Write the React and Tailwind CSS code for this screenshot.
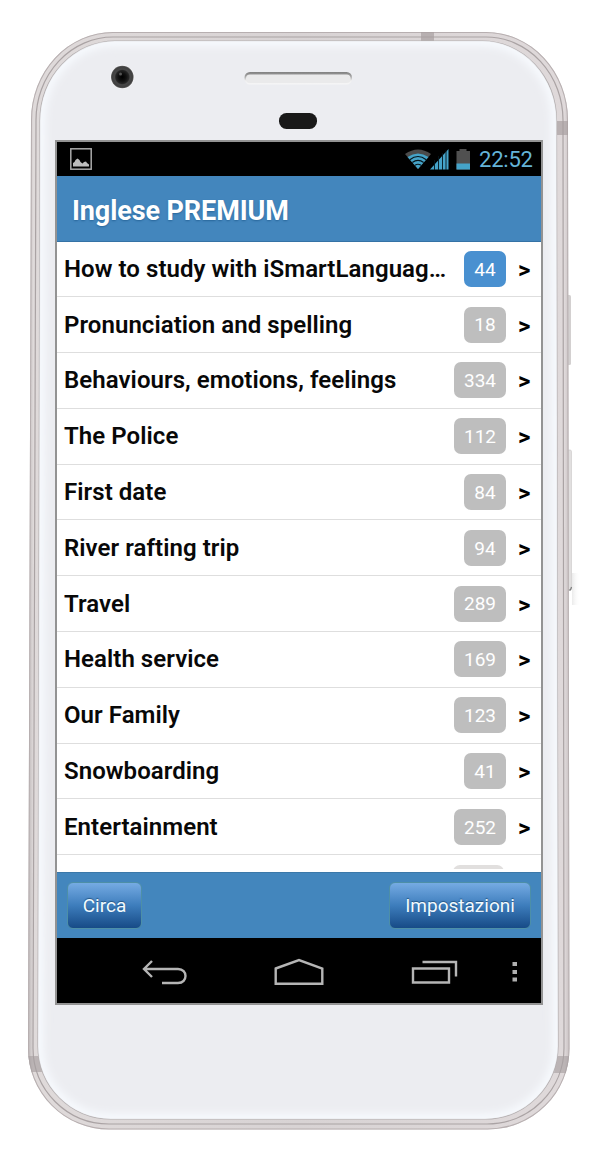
const topics = [
  ["How to study with iSmartLanguag…", 44, true],
  ["Pronunciation and spelling", 18],
  ["Behaviours, emotions, feelings", 334],
  ["The Police", 112],
  ["First date", 84],
  ["River rafting trip", 94],
  ["Travel", 289],
  ["Health service", 169],
  ["Our Family", 123],
  ["Snowboarding", 41],
  ["Entertainment", 252],
];

const OUTER = "M113 32H486A82 88 0 0 1 568 120L569.5 1048A82 81 0 0 1 487 1129.5H109A81 81 0 0 1 28 1048L31 120A82 88 0 0 1 113 32Z";
const SEAM = "M113 37H486A77 83 0 0 1 563 120L564 1048A77 76 0 0 1 487 1124H109A76 76 0 0 1 33 1048L36 120A77 83 0 0 1 113 37Z";
const FACE = "M115 41H482A74 80 0 0 1 556.500 121L558 1046A73 73 0 0 1 485 1119H111A73 73 0 0 1 38 1046L40 121A75 80 0 0 1 115 41Z";

function PhoneBody() {
  return (
    <svg className="absolute inset-0" width="600" height="1162" viewBox="0 0 600 1162" fill="none">
      <defs>
        <linearGradient id="rim" x1="28" x2="570" y1="0" y2="0" gradientUnits="userSpaceOnUse">
          <stop offset="0" stopColor="#bcb6b7" />
          <stop offset=".01" stopColor="#dfdada" />
          <stop offset=".5" stopColor="#d8d3d4" />
          <stop offset=".99" stopColor="#dfd9da" />
          <stop offset="1" stopColor="#c5bdbe" />
        </linearGradient>
        <linearGradient id="shade" x1="0" x2="1">
          <stop stopColor="#aaa" stopOpacity=".4" />
          <stop offset="1" stopColor="#fff" stopOpacity="0" />
        </linearGradient>
        <linearGradient id="slot" x1="0" x2="0" y1="0" y2="1">
          <stop stopColor="#808080" />
          <stop offset=".35" stopColor="#a5a5a5" />
          <stop offset=".7" stopColor="#f0f0f0" />
          <stop offset="1" stopColor="#f6f6f7" />
        </linearGradient>
        <radialGradient id="lens">
          <stop stopColor="#000" />
          <stop offset=".35" stopColor="#111" />
          <stop offset=".58" stopColor="#252525" />
          <stop offset=".68" stopColor="#474747" />
          <stop offset=".9" stopColor="#404040" />
          <stop offset="1" stopColor="#666" />
        </radialGradient>
        <filter id="soft"><feGaussianBlur stdDeviation="4" /></filter>
        <clipPath id="rimClip"><path d={OUTER} /></clipPath>
        <clipPath id="faceClip"><path d={FACE} /></clipPath>
      </defs>
      <rect x="566" y="295" width="5" height="70" rx="1.5" fill="#d3d0d0" />
      <rect x="566" y="450" width="5.5" height="140" rx="1.5" fill="#e1dfdf" stroke="#c9c6c6" strokeWidth=".6" />
      <path d="M568 590h2.5l1-3" stroke="#777" strokeWidth="1.2" />
      <rect x="572" y="573" width="8" height="32" fill="url(#shade)" opacity=".6" />
      <path d={OUTER} fill="url(#rim)" />
      <g clipPath="url(#rimClip)">
        <path d={OUTER} stroke="#b7afb0" strokeWidth="2" />
        <path d={SEAM} stroke="#aaa3a4" strokeWidth="1.2" />
        <path d="M421 32h13v9h-13zM556 121h13v14h-13z" fill="#a89fa1" fillOpacity=".7" />
        <path d="M28 1056h12l2 16H28zM556 1056h14v17h-16z" fill="#a89fa1" fillOpacity=".65" />
      </g>
      <path d={FACE} fill="#ecedf1" stroke="#b4afb0" strokeWidth="1.2" />
      <g clipPath="url(#faceClip)">
        <path d={FACE} stroke="#f8fbff" strokeWidth="10" filter="url(#soft)" />
      </g>
      <circle cx="122.3" cy="77" r="12" fill="#f6f6f8" />
      <circle cx="122.3" cy="77" r="11.3" fill="url(#lens)" />
      <circle cx="120.500" cy="74" r="1.5" fill="#555" />
      <rect x="244.500" y="72" width="107.500" height="12.500" rx="5.500" fill="url(#slot)" />
      <rect x="246" y="74.500" width="104.500" height="8.500" rx="4" fill="#eaeaeb" />
      <rect x="279" y="113" width="38" height="16" rx="7.500" fill="#191919" />
    </svg>
  );
}

function StatusBar() {
  return (
    <div className="flex h-[34px] shrink-0 items-center bg-black pl-[13px] pr-[8px]">
      <svg width="22" height="22" viewBox="0 0 22 22" fill="none">
        <rect x=".8" y=".8" width="20.4" height="20.4" stroke="#a9a9a9" strokeWidth="1.5" />
        <path d="M3 18.500V15l1.500-1 1-2 2-1.500 2 1.500 1 2 2 1.500 1.500-1.500 2-.5 1 1.500 2 1.500v2z" fill="#bdbdbd" />
      </svg>
      <svg className="ml-auto mt-px" width="68" height="24" viewBox="0 0 68 24" fill="none">
        <path d="M1 6Q14-3 27 6L14 21z" fill="#4b4b4b" />
        <path d="M3.5 9Q14 2 24.5 9L14 21z" fill="#45a3c8" />
        <path d="M5.8 11.7Q14 5.3 22.2 11.7M8.3 14.5Q14 10.3 19.7 14.5M11 17.3Q14 15.2 17 17.3" stroke="#05151c" strokeWidth="1.2" />
        <path d="M26 21.500L44.500 1V21.500z" fill="#45a3c8" />
        <path d="M30.500 12v10M34.500 8v14M38.500 5v17M42 2v20" stroke="#05151c" strokeWidth=".9" />
        <path d="M52.500 3h3V1h7v2h3.500v18.500h-13.500z" fill="#505050" />
        <path d="M52.500 15.500H66v6H52.500z" fill="#45a3c8" />
      </svg>
      <span className="ml-[7px] mt-[2px] w-[54px] whitespace-nowrap text-[22px] leading-none tracking-[-0.2px] text-[#65b4d8]">22:52</span>
    </div>
  );
}

function TopicRow({ title, count, active }) {
  return (
    <div className="flex h-[55.8px] shrink-0 items-center border-b border-[#dedede] pl-[7px] pr-[11px]">
      <span className="whitespace-nowrap text-[24px] font-semibold leading-8 tracking-[0.06px] text-[#080808]">{title}</span>
      <span
        className={`ml-auto flex h-[36px] items-center justify-center rounded-[7px] pt-[2px] text-[19px] text-white ${
          active ? "bg-[#4990d0]" : "bg-[#bebebe]"
        } ${count > 99 ? "w-[52px]" : "w-[42px]"}`}
      >
        {count}
      </span>
      <span className="ml-[12px] w-[12px] pt-[2px] text-[24px] font-bold leading-8 text-black">&gt;</span>
    </div>
  );
}

function ActionButton({ children, className }) {
  return (
    <button
      className={`h-[47px] rounded-[6px] border border-[#4d8fa7] bg-linear-to-b from-[#75abe3] via-[#3d7dbc] to-[#174b87] pt-px text-[19px] text-[#f2faff] [text-shadow:0_-1px_1px_#245583] ${className}`}
    >
      {children}
    </button>
  );
}

function NavBar() {
  return (
    <div className="flex h-[65px] shrink-0 items-center bg-black pl-[84px] pr-[23px] pt-[3px]">
      <svg width="48" height="28" viewBox="0 0 48 28" fill="none" stroke="#b5b5b5" strokeWidth="2.4">
        <path d="M11 3L3 11l8 8M3 11h34c10 0 10 14 0 14H21" />
      </svg>
      <svg className="ml-[84px]" width="52" height="30" viewBox="0 0 52 30" fill="none" stroke="#b5b5b5" strokeWidth="2.4">
        <path d="M2.700 11.500L26 3l23.300 8.500v15.300H2.700z" />
      </svg>
      <svg className="ml-[85px]" width="50" height="28" viewBox="0 0 50 28" fill="none" stroke="#b5b5b5" strokeWidth="2.4">
        <path d="M3 10.500h36v14H3zM12.500 4H46v14.500" />
      </svg>
      <svg className="ml-auto" width="6" height="22" viewBox="0 0 6 22" fill="#b0b0b0">
        <path d="M.5 1H5v4H.5zM.5 9H5v4H.5zM.5 16.500H5v4H.5z" />
      </svg>
    </div>
  );
}

export default function App() {
  return (
    <main className="relative h-[1162px] w-[600px] overflow-hidden bg-white pl-[55px] pt-[140px] font-['Roboto',sans-serif]">
      <PhoneBody />
      <section className="relative flex h-[865px] w-[488px] flex-col border-2 border-[#939393] bg-white">
        <StatusBar />
        <header className="flex h-[65.5px] shrink-0 items-center border-b border-[#3472a5] bg-[#4386bd] pl-[15px] pt-[5px] text-[27px] font-bold tracking-[-0.1px] text-white [text-shadow:0_1px_2px_#28669a]">
          Inglese PREMIUM
        </header>
        <div className="flex h-[627.5px] shrink-0 flex-col overflow-hidden">
          {topics.map(([title, count, active]) => (
            <TopicRow key={title} title={title} count={count} active={active} />
          ))}
          <div className="mt-[10px] mr-[37px] h-[37px] w-[51px] shrink-0 self-end rounded-[7px] bg-[#e1dfde]" />
        </div>
        <footer className="mt-[3px] flex h-[66px] shrink-0 items-center justify-between border-t border-[#3b78a9] bg-[#4386bd] pl-[10px] pr-[10px]">
          <ActionButton className="w-[75px]">Circa</ActionButton>
          <ActionButton className="w-[142px]">Impostazioni</ActionButton>
        </footer>
        <NavBar />
      </section>
    </main>
  );
}
